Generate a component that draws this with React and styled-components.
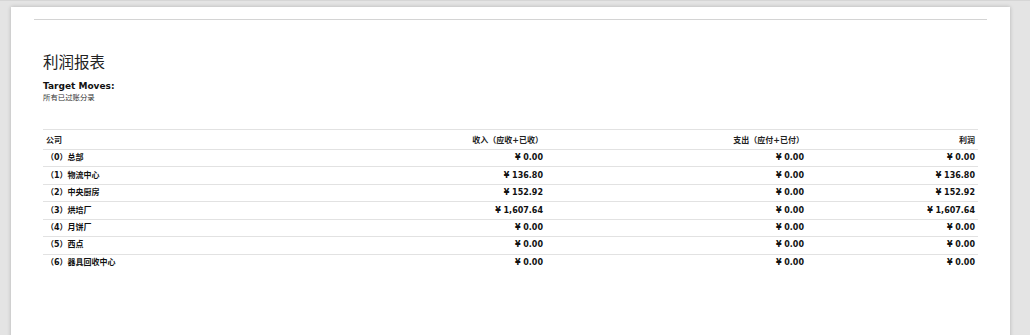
import React from "react";
import styled, { createGlobalStyle } from "styled-components";

const Global = createGlobalStyle`
  html, body { margin: 0; padding: 0; }
  body {
    background: #e4e4e4;
    font-family: "DejaVu Sans", "Noto Sans CJK SC", sans-serif;
    color: #212529;
    overflow: hidden;
  }
`;

const Page = styled.div`
  padding: 7px 20px 0 11px;
  height: 335px;
  box-sizing: border-box;
  border-top: 1px solid #d6d6d6;
`;

const Sheet = styled.div`
  width: 999px;
  min-height: 340px;
  background: #fff;
  box-sizing: border-box;
  padding: 12px 23px 0;
  margin-top: -1px;
  box-shadow: 0 0 4px rgba(0, 0, 0, 0.22);
`;

const Rule = styled.div`
  border-top: 1px solid #d4d4d4;
`;

const Content = styled.div`
  padding: 0 9px;
`;

const Title = styled.h2`
  margin: 34px 0 0;
  font-size: 15.5px;
  line-height: 18px;
  font-weight: 400;
  color: #222;
`;

const Label = styled.div`
  margin-top: 8px;
  font-size: 9px;
  line-height: 12px;
  font-weight: 700;
  color: #111;
`;

const Sub = styled.div`
  margin-top: 1px;
  font-size: 7.4px;
  line-height: 10px;
  color: #333;
`;

const Table = styled.table`
  margin-top: 26px;
  width: 935px;
  border-collapse: collapse;
  table-layout: fixed;
  font-size: 8px;
`;

const Col = styled.col`
  width: ${(p) => p.$w}px;
`;

const HeadCell = styled.th`
  height: 18px;
  padding: 0 3px 1px;
  border-top: 1px solid #e2e2e2;
  border-bottom: 1px solid #e2e2e2;
  font-weight: 700;
  color: #222;
  text-align: ${(p) => (p.$right ? "right" : "left")};
  white-space: nowrap;
`;

const Row = styled.tr`
  &:not(:last-child) td {
    border-bottom: 1px solid #e2e2e2;
  }
`;

const Cell = styled.td`
  height: 16.45px;
  line-height: 10px;
  padding: 0 3px 0 ${(p) => (p.$indent ? 7 : 3)}px;
  font-weight: 700;
  color: #111;
  text-align: ${(p) => (p.$right ? "right" : "left")};
  white-space: nowrap;
`;

const rows = [
  ["（0）总部", "¥ 0.00", "¥ 0.00", "¥ 0.00"],
  ["（1）物流中心", "¥ 136.80", "¥ 0.00", "¥ 136.80"],
  ["（2）中央厨房", "¥ 152.92", "¥ 0.00", "¥ 152.92"],
  ["（3）烘培厂", "¥ 1,607.64", "¥ 0.00", "¥ 1,607.64"],
  ["（4）月饼厂", "¥ 0.00", "¥ 0.00", "¥ 0.00"],
  ["（5）西点", "¥ 0.00", "¥ 0.00", "¥ 0.00"],
  ["（6）器具回收中心", "¥ 0.00", "¥ 0.00", "¥ 0.00"],
];

const Name = styled.span`
  margin-left: -4px;
`;

export default function App() {
  return (
    <>
      <Global />
      <Page>
        <Sheet>
          <Rule />
          <Content>
            <Title>利润报表</Title>
            <Label>Target Moves:</Label>
            <Sub>所有已过账分录</Sub>
            <Table>
              <colgroup>
                <Col $w={270} />
                <Col $w={233} />
                <Col $w={261} />
                <Col $w={171} />
              </colgroup>
              <thead>
                <tr>
                  <HeadCell>公司</HeadCell>
                  <HeadCell $right>收入（应收+已收）</HeadCell>
                  <HeadCell $right>支出（应付+已付）</HeadCell>
                  <HeadCell $right>利润</HeadCell>
                </tr>
              </thead>
              <tbody>
                {rows.map((r) => (
                  <Row key={r[0]}>
                    <Cell $indent>
                      <Name>{r[0]}</Name>
                    </Cell>
                    <Cell $right>{r[1]}</Cell>
                    <Cell $right>{r[2]}</Cell>
                    <Cell $right>{r[3]}</Cell>
                  </Row>
                ))}
              </tbody>
            </Table>
          </Content>
        </Sheet>
      </Page>
    </>
  );
}
